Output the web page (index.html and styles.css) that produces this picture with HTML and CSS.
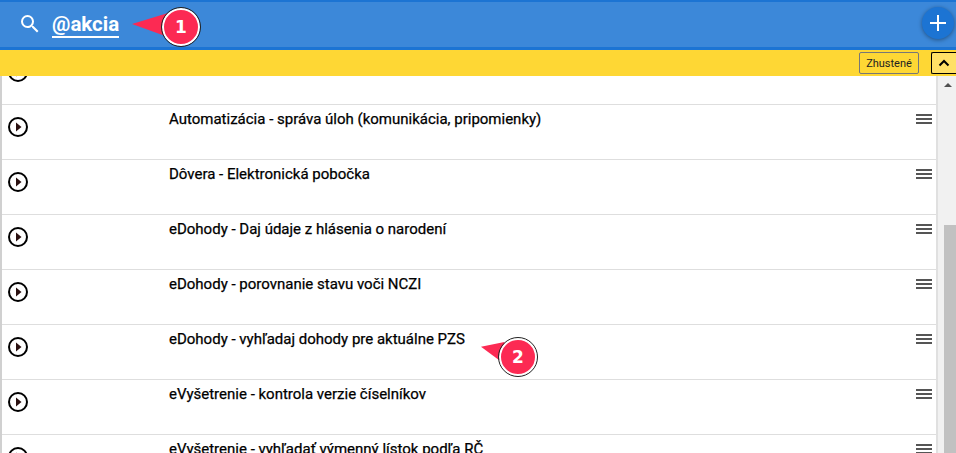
FILE: index.html
```html
<!DOCTYPE html>
<html lang="sk">
<head>
  <meta charset="UTF-8" />
  <title>Akcie</title>
  <link rel="stylesheet" href="styles.css">
</head>
<body>
  <header class="topbar">
    <svg class="search-icon" viewBox="0 0 24 24" width="24" height="24"><path fill="#fff" d="M15.5 14h-.79l-.28-.27A6.47 6.47 0 0 0 16 9.5 6.5 6.5 0 1 0 9.5 16c1.61 0 3.09-.59 4.23-1.57l.27.28v.79l5 4.99L20.49 19l-4.99-5zm-6 0C7.01 14 5 11.99 5 9.5S7.01 5 9.5 5 14 7.01 14 9.5 11.99 14 9.5 14z"/></svg>
    <span class="search-text">@akcia</span>
    <button class="add-btn">
      <svg viewBox="0 0 16 16" width="16" height="16"><path fill="#fff" d="M7 0h2v7h7v2H9v7H7V9H0V7h7z"/></svg>
    </button>
  </header>

  <div class="toolbar">
    <button class="dense-btn">Zhustené</button>
    <button class="collapse-btn">
      <svg viewBox="0 0 12 8" width="12" height="8"><path fill="none" stroke="#000" stroke-width="2" d="M1.5 6.5 6 2l4.5 4.5"/></svg>
    </button>
  </div>

  <div class="content">
    <div class="list-wrap">
      <ul class="list" id="list"></ul>
    </div>
    <div class="scrollbar">
      <div class="scroll-arrow"></div>
      <div class="scroll-thumb"></div>
    </div>
  </div>

  <div class="callout callout-1">
    <div class="pointer"></div>
    <div class="badge">1</div>
  </div>
  <div class="callout callout-2">
    <div class="pointer"></div>
    <div class="badge">2</div>
  </div>

  <script>
    const rows = [
      "",
      "Automatizácia - správa úloh (komunikácia, pripomienky)",
      "Dôvera - Elektronická pobočka",
      "eDohody - Daj údaje z hlásenia o narodení",
      "eDohody - porovnanie stavu voči NCZI",
      "eDohody - vyhľadaj dohody pre aktuálne PZS",
      "eVyšetrenie - kontrola verzie číselníkov",
      "eVyšetrenie - vyhľadať výmenný lístok podľa RČ"
    ];

    const list = document.getElementById("list");
    rows.forEach(name => {
      const li = document.createElement("li");
      li.className = "row";
      li.innerHTML = `
        <svg class="play" viewBox="0 0 20 20" width="20" height="20"><circle cx="10" cy="10" r="9" fill="none" stroke="#000" stroke-width="2"/><path fill="#2a1010" d="M8 5.5l5.5 4.5-5.5 4.5z"/></svg>
        <span class="row-name">${name}</span>
        <svg class="menu" viewBox="0 0 16 10" width="16" height="10"><path fill="#555" d="M0 0h16v2H0zM0 4h16v2H0zM0 8h16v2H0z"/></svg>
      `;
      list.appendChild(li);
    });
  </script>
</body>
</html>
```

FILE: styles.css
```css
html, body {
  height: 100%;
}

body {
  margin: 0;
  height: 453px;
  overflow: hidden;
  font-family: 'Roboto', sans-serif;
  background: #fff;
  color: #000;
  display: flex;
  flex-direction: column;
  position: relative;
}

.topbar {
  height: 45px;
  flex: none;
  background: #3c88d9;
  border-top: 2px solid #1c74d3;
  border-bottom: 3px solid #1c74d3;
  display: flex;
  align-items: center;
  padding-left: 18px;
}

.search-icon {
  flex: none;
  margin-bottom: 1px;
}

.search-text {
  margin-left: 10px;
  color: #fff;
  font-size: 20.5px;
  font-weight: 700;
  border-bottom: 2px solid #fff;
  line-height: 24px;
  margin-top: 1px;
}

.add-btn {
  margin-left: auto;
  margin-right: 2px;
  margin-bottom: 4px;
  width: 32px;
  height: 32px;
  border: none;
  border-radius: 50%;
  padding: 0;
  background: #1c74d3;
  box-shadow: 0 1px 4px rgba(0, 0, 0, 0.4);
  display: flex;
  align-items: center;
  justify-content: center;
}

.toolbar {
  height: 26px;
  flex: none;
  background: #fed734;
  display: flex;
  align-items: center;
  justify-content: flex-end;
}

.dense-btn {
  height: 22px;
  width: 60px;
  padding: 0;
  font-family: 'Roboto', sans-serif;
  font-size: 11px;
  color: #222;
  background: transparent;
  border: 1px solid #777;
  border-radius: 2px;
}

.collapse-btn {
  width: 25px;
  height: 22px;
  margin-left: 12px;
  padding: 0;
  background: #ffe066;
  border: 1px solid #000;
  border-right: none;
  border-radius: 2px 0 0 2px;
  display: flex;
  align-items: center;
  justify-content: center;
}

.content {
  flex: 1;
  min-height: 0;
  display: flex;
}

.list-wrap {
  flex: 1;
  overflow: hidden;
  border-left: 2px solid #d0d0d0;
  border-right: 2px solid #e0e0e0;
}

.list {
  list-style: none;
  margin: -26px 0 0;
  padding: 0;
}

.row {
  height: 54px;
  border-bottom: 1px solid #dedede;
  display: flex;
  align-items: flex-start;
}

.play {
  flex: none;
  margin: 12px 0 0 6px;
}

.row-name {
  margin: 5px 0 0 141px;
  flex: 1;
  font-size: 15px;
  font-weight: 400;
  line-height: 18px;
  -webkit-text-stroke: 0.25px #000;
}

.menu {
  flex: none;
  margin: 9px 4px 0 0;
}

.scrollbar {
  width: 18px;
  flex: none;
  background: #f1f1f1;
  display: flex;
  flex-direction: column;
  align-items: flex-end;
}

.scroll-arrow {
  width: 0;
  height: 0;
  margin: 7px 4px 0 0;
  border-left: 4px solid transparent;
  border-right: 4px solid transparent;
  border-bottom: 4px solid #505050;
}

.scroll-thumb {
  width: 12px;
  margin-top: 138px;
  flex: 1;
  background: #c1c1c1;
}

.callout {
  position: absolute;
}

.callout-1 {
  left: 132px;
  top: 7px;
}

.callout-2 {
  left: 481px;
  top: 337px;
}

.pointer {
  position: absolute;
  background: #fc2a53;
}

.callout-1 .pointer {
  left: 0;
  top: 6px;
  width: 36px;
  height: 24px;
  clip-path: polygon(0 46%, 100% 0, 100% 100%);
}

.callout-2 .pointer {
  left: 0;
  top: 5px;
  width: 26px;
  height: 24px;
  clip-path: polygon(0 20%, 90% 0, 100% 100%);
}

.badge {
  position: absolute;
  width: 38px;
  height: 38px;
  border-radius: 50%;
  background: #fc2a53;
  border: 2px solid #fff;
  outline: 1px solid #222;
  box-sizing: border-box;
  color: #fff;
  font-family: 'DejaVu Sans', sans-serif;
  font-size: 17px;
  font-weight: 700;
  display: flex;
  align-items: center;
  justify-content: center;
}

.callout-1 .badge {
  left: 30px;
  top: 1px;
}

.callout-2 .badge {
  left: 18px;
  top: 1px;
}
```
